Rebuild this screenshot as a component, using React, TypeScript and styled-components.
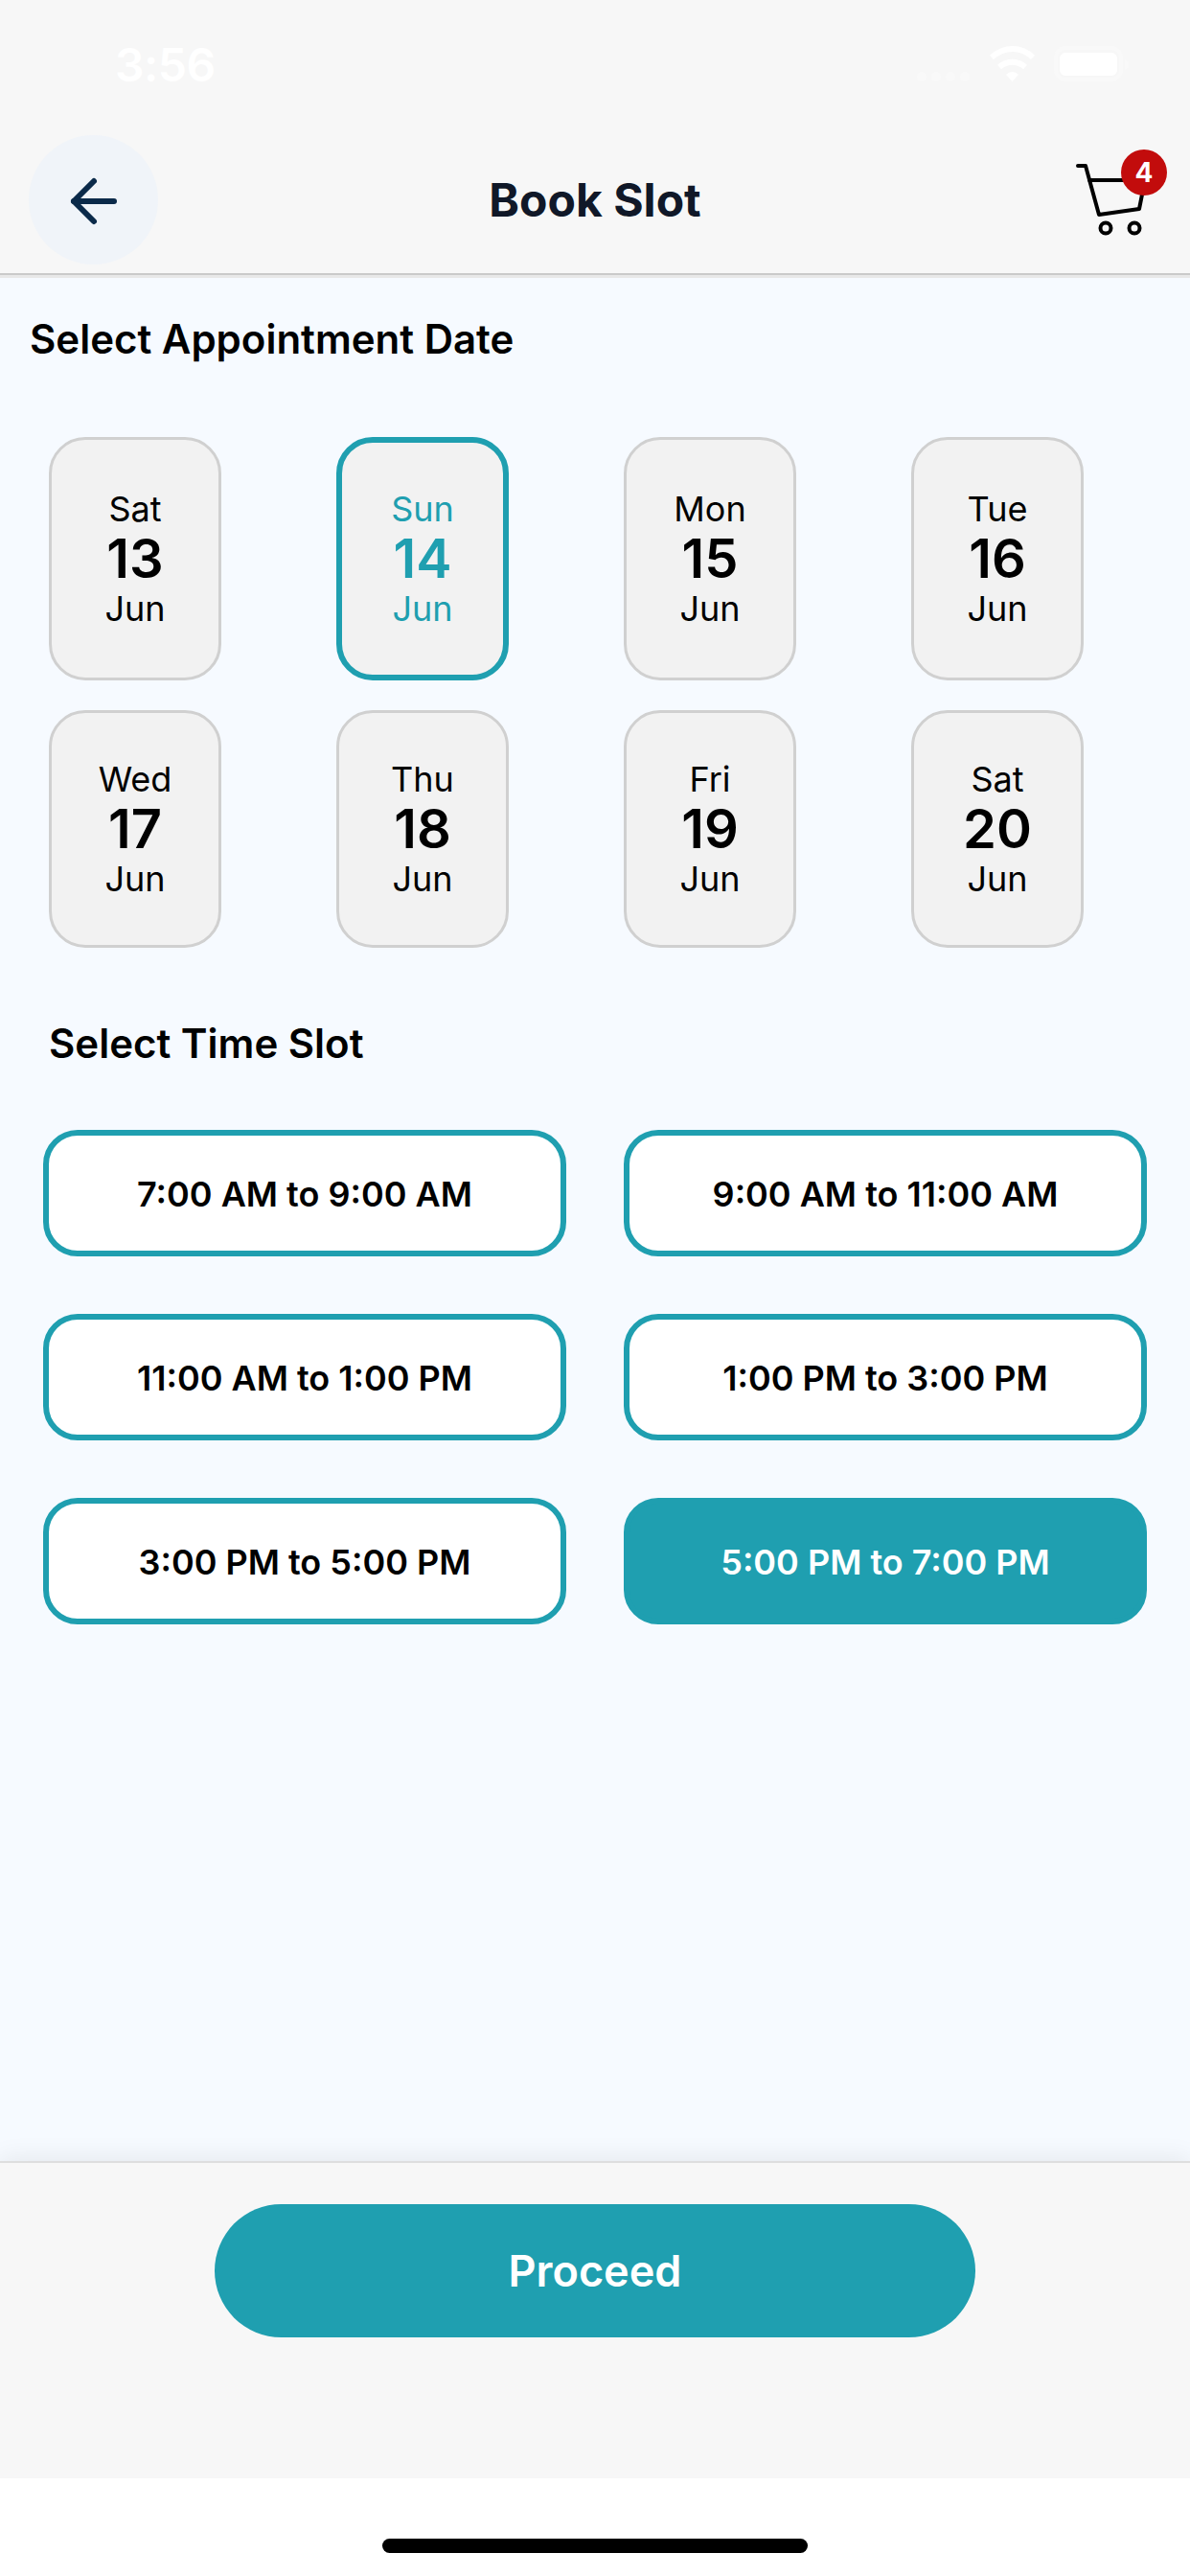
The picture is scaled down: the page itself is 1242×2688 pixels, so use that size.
import React from 'react'
import styled, { createGlobalStyle } from 'styled-components'

const TEAL = '#1f9fb0'

const GlobalStyle = createGlobalStyle`
  html, body {
    margin: 0;
    padding: 0;
    background: #fff;
  }
  * {
    box-sizing: border-box;
  }
`

const Page = styled.div`
  width: 1242px;
  height: 2688px;
  display: flex;
  flex-direction: column;
  overflow: hidden;
  font-family: Inter, "Liberation Sans", sans-serif;
  color: #000;
`

const StatusBar = styled.div`
  height: 120px;
  flex: none;
  background: #f7f7f7;
  display: flex;
  justify-content: space-between;
  padding: 40px 60px 0 120px;
`

const Clock = styled.div`
  font-size: 48px;
  line-height: 56px;
  font-weight: 600;
  color: #fff;
  letter-spacing: -0.5px;
`

const StatusIcons = styled.svg`
  width: 226px;
  height: 40px;
  margin-top: 7px;
  display: block;
`

const NavBar = styled.header`
  height: 167px;
  flex: none;
  position: relative;
  z-index: 1;
  background: #f7f7f7;
  border-bottom: 2px solid #cacaca;
  box-shadow: 0 3px 0 #e8e8e8;
  display: grid;
  grid-template-columns: 1fr auto 1fr;
  align-items: center;
  padding: 21px 30px 10px 30px;
`

const BackButton = styled.button`
  width: 135px;
  height: 135px;
  border: 0;
  padding: 0;
  border-radius: 50%;
  background: #f0f4f9;
  display: flex;
  align-items: center;
  justify-content: center;
`

const Title = styled.h1`
  margin: 0;
  font-size: 48px;
  line-height: 58px;
  font-weight: 700;
  color: #101828;
`

const CartBox = styled.div`
  position: relative;
  width: 100px;
  height: 90px;
  justify-self: end;
  margin: 0 -6px 16px 0;
`

const CartBadge = styled.span`
  position: absolute;
  left: 52px;
  top: 0;
  width: 48px;
  height: 48px;
  border-radius: 50%;
  background: #c20c0c;
  color: #fff;
  font-size: 28px;
  font-weight: 700;
  display: flex;
  align-items: center;
  justify-content: center;
`

const Content = styled.main`
  flex: 1;
  background: #f6faff;
  display: flex;
  flex-direction: column;
  padding-top: 42px;
`

const SectionTitle = styled.h2<{ $inset: number }>`
  margin: 0;
  padding-left: ${({ $inset }) => $inset}px;
  font-size: 42px;
  line-height: 50px;
  font-weight: 600;
  color: #000;
`

const DateGrid = styled.div`
  display: grid;
  grid-template-columns: repeat(4, 180px);
  column-gap: 120px;
  row-gap: 31px;
  padding: 0 0 0 51px;
  margin: 77px 0 75px;
`

const DateCard = styled.div<{ $active?: boolean }>`
  display: flex;
  flex-direction: column;
  align-items: center;
  justify-content: center;
  padding: 47px 0;
  border-radius: 38px;
  background: #f2f2f2;
  border: ${({ $active }) => ($active ? `6px solid ${TEAL}` : '3px solid #d0d0d0')};
  color: ${({ $active }) => ($active ? TEAL : '#000')};
`

const DateLabel = styled.span`
  font-size: 36px;
  line-height: 44px;
  font-weight: 400;
`

const DateNumber = styled.span`
  font-size: 56px;
  line-height: 60px;
  font-weight: 600;
`

const SlotGrid = styled.div`
  display: grid;
  grid-template-columns: repeat(2, 546px);
  column-gap: 60px;
  row-gap: 60px;
  padding-left: 45px;
  margin-top: 65px;
`

const Slot = styled.div<{ $active?: boolean }>`
  height: 132px;
  padding-top: 2px;
  border-radius: 36px;
  border: 6px solid ${TEAL};
  background: ${({ $active }) => ($active ? TEAL : '#fff')};
  color: ${({ $active }) => ($active ? '#fff' : '#000')};
  font-size: 36px;
  font-weight: 600;
  display: flex;
  align-items: center;
  justify-content: center;
`

const Footer = styled.footer`
  height: 331px;
  flex: none;
  position: relative;
  background: #f7f7f7;
  border-top: 2px solid #dedede;
  box-shadow: 0 -4px 24px rgba(0, 0, 0, 0.07);
  display: flex;
  justify-content: center;
  padding-top: 43px;
`

const ProceedButton = styled.button`
  width: 794px;
  height: 139px;
  border: 0;
  border-radius: 70px;
  background: ${TEAL};
  color: #fff;
  font-family: inherit;
  font-size: 45px;
  font-weight: 600;
`

const HomeArea = styled.div`
  height: 102px;
  flex: none;
  position: relative;
  background: #fff;
  display: flex;
  justify-content: center;
  padding-top: 63px;
`

const HomeIndicator = styled.div`
  width: 444px;
  height: 15px;
  border-radius: 8px;
  background: #000;
`

const dates = [
  { day: 'Sat', num: 13 },
  { day: 'Sun', num: 14, active: true },
  { day: 'Mon', num: 15 },
  { day: 'Tue', num: 16 },
  { day: 'Wed', num: 17 },
  { day: 'Thu', num: 18 },
  { day: 'Fri', num: 19 },
  { day: 'Sat', num: 20 },
]

const slots = [
  { label: '7:00 AM to 9:00 AM' },
  { label: '9:00 AM to 11:00 AM' },
  { label: '11:00 AM to 1:00 PM' },
  { label: '1:00 PM to 3:00 PM' },
  { label: '3:00 PM to 5:00 PM' },
  { label: '5:00 PM to 7:00 PM', active: true },
]

export default function App() {
  return (
    <Page>
      <GlobalStyle />
      <StatusBar>
        <Clock>3:56</Clock>
        <StatusIcons viewBox="0 0 226 40">
          <g fill="#f9f9f9">
            <circle cx="6" cy="33" r="5" />
            <circle cx="21" cy="33" r="5" />
            <circle cx="36" cy="33" r="5" />
            <circle cx="51" cy="33" r="5" />
          </g>
          <g fill="none" stroke="#fff" strokeWidth="6">
            <path d="M79 13 C92 1 110 1 122 13" />
            <path d="M87 23 C95 16 106 16 114 23" />
          </g>
          <path d="M94 31 C98 27 103 27 107 31 L100.5 38 Z" fill="#fff" />
          <rect x="146" y="3" width="68" height="33" rx="10" fill="none" stroke="#f9f9f9" strokeWidth="4" />
          <rect x="150" y="8" width="60" height="24" rx="6" fill="#fff" />
          <path d="M218 15 L222 18 V23 L218 26 Z" fill="#f9f9f9" />
        </StatusIcons>
      </StatusBar>

      <NavBar>
        <BackButton aria-label="Back">
          <svg width="60" height="60" viewBox="0 0 60 60" fill="none" stroke="#0b2a4a" strokeWidth="6" strokeLinecap="round" strokeLinejoin="round">
            <path d="M9 31 H51" />
            <path d="M30 10 L9 31 L30 52" />
          </svg>
        </BackButton>
        <Title>Book Slot</Title>
        <CartBox>
          <svg width="100" height="90" viewBox="0 0 100 90" fill="none" stroke="#000" strokeWidth="4" strokeLinecap="round" strokeLinejoin="round">
            <path d="M7 17 H15 L29 68 L71 62 L75 42" />
            <path d="M19 32 H60" />
            <circle cx="36" cy="82" r="5.5" />
            <circle cx="66" cy="82" r="5.5" />
          </svg>
          <CartBadge>4</CartBadge>
        </CartBox>
      </NavBar>

      <Content>
        <SectionTitle $inset={31}>Select Appointment Date</SectionTitle>
        <DateGrid>
          {dates.map((d) => (
            <DateCard key={d.num} $active={d.active}>
              <DateLabel>{d.day}</DateLabel>
              <DateNumber>{d.num}</DateNumber>
              <DateLabel>Jun</DateLabel>
            </DateCard>
          ))}
        </DateGrid>
        <SectionTitle $inset={51}>Select Time Slot</SectionTitle>
        <SlotGrid>
          {slots.map((s) => (
            <Slot key={s.label} $active={s.active}>{s.label}</Slot>
          ))}
        </SlotGrid>
      </Content>

      <Footer>
        <ProceedButton>Proceed</ProceedButton>
      </Footer>
      <HomeArea>
        <HomeIndicator />
      </HomeArea>
    </Page>
  )
}
